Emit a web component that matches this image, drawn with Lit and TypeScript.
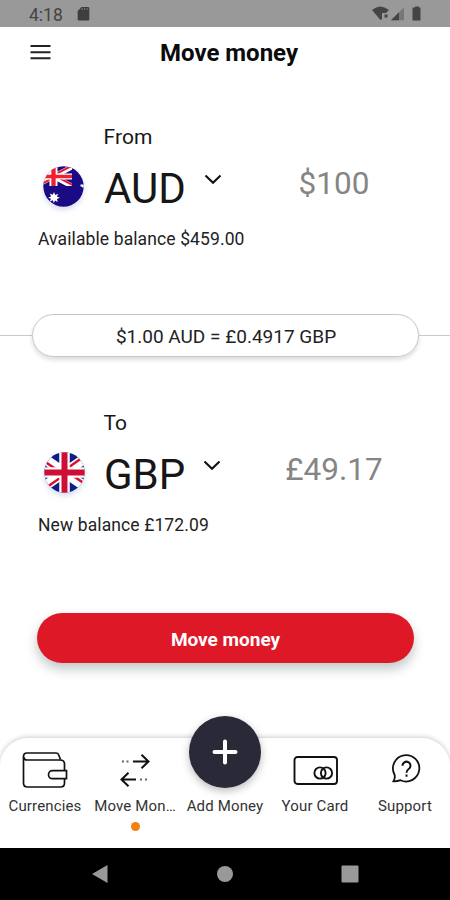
import { LitElement, html, css, svg } from "lit";
import { customElement, property } from "lit/decorators.js";

const diagonals = svg`
  <path d="M0 0L60 40M60 0L0 40" stroke="#fff" stroke-width="10"/>
  <path d="M0 0L30 20" stroke="#e8152c" stroke-width="4" transform="translate(-1 2)"/>
  <path d="M60 0L30 20" stroke="#e8152c" stroke-width="4" transform="translate(-1 -2)"/>
  <path d="M60 40L30 20" stroke="#e8152c" stroke-width="4" transform="translate(1 -2)"/>
  <path d="M0 40L30 20" stroke="#e8152c" stroke-width="4" transform="translate(1 2)"/>`;

const australia = html`<svg width="41" height="41" viewBox="0 0 41 41">
  <clipPath id="round"><circle cx="20.5" cy="20.5" r="20.2"/></clipPath>
  <g clip-path="url(#round)">
    <rect width="41" height="41" fill="#1a0a84"/>
    <svg x="-8" y="1" width="37" height="19" viewBox="0 0 60 40" preserveAspectRatio="none">
      ${diagonals}
      <path d="M30 0V40M0 20H60" stroke="#fff" stroke-width="13"/>
      <path d="M30 0V40M0 20H60" stroke="#f0202c" stroke-width="7"/>
    </svg>
    <path fill="#fff" d="M11 26l1.2 3 3-1.3-1.3 2.8 3 1.3-3 1.2.9 3-2.8-1.5-1.1 2.6-1.2-2.8-3 1.3 1.3-2.8-2.9-1.1 3-1.3-1.2-2.9 2.9 1.3z"/>
    <path fill="#fff" d="M37.500 18.500h4v3h-2l-1-1h-1z"/>
  </g>
</svg>`;

const britain = html`<svg width="41" height="41" viewBox="0 0 41 41">
  <clipPath id="disc"><circle cx="20.5" cy="20.5" r="20.2"/></clipPath>
  <g clip-path="url(#disc)">
    <rect width="41" height="41" fill="#101c87"/>
    <svg x="-5" y="3" width="51" height="35" viewBox="0 0 60 40" preserveAspectRatio="none" overflow="visible">
      <path d="M-6 -4L66 44M66 -4L-6 44" stroke="#fff" stroke-width="11.500"/>
      <path d="M-3 1L21 17M63 39L39 23M57 -1L35 14M3 41L25 26" stroke="#d8112f" stroke-width="2.8"/>
    </svg>
    <path d="M20.5 0V41M0 20.5H41" stroke="#fff" stroke-width="10.5"/>
    <path d="M20.5 0V41M0 20.5H41" stroke="#ce0f35" stroke-width="6"/>
  </g>
</svg>`;

@customElement("currency-panel")
class CurrencyPanel extends LitElement {
  @property() label = "";
  @property() code = "";
  @property() amount = "";
  @property() balance = "";

  static styles = css`
    :host { display: block; height: 136px; color: #161616; }
    .label { height: 30px; line-height: 31px; padding-left: 103.5px; font-size: 21px; letter-spacing: 0.1px; }
    .row { display: grid; grid-template-columns: 104px 99px 46px 170px; height: 70px; }
    .flag { height: 41px; width: 41px; margin: 14px 0 0 43px; border-radius: 50%; box-shadow: 0 3px 5px #9db4d866; }
    :host([code="GBP"]) .flag { margin-left: 44px; }
    .code { font-size: 42px; line-height: 74px; }
    .chev { padding: 22px 0 0 1px; }
    :host([code="GBP"]) .chev { padding-left: 0; }
    .amount { font-size: 31.5px; line-height: 64px; color: #858585; text-align: center; }
    .balance { height: 34px; line-height: 34px; padding-left: 38px; font-size: 17.5px; letter-spacing: 0.11px; color: #222; }
    svg { display: block; }
  `;

  render() {
    return html`
      <div class="label">${this.label}</div>
      <div class="row">
        <div class="flag">${this.code === "AUD" ? australia : britain}</div>
        <div class="code">${this.code}</div>
        <div class="chev"><svg width="18" height="11" viewBox="0 0 18 11"><path d="M1.5 1.5L9 8.7l7.5-7.2" fill="none" stroke="#111" stroke-width="2.1"/></svg></div>
        <div class="amount">${this.amount}</div>
      </div>
      <div class="balance">${this.balance}</div>`;
  }
}

@customElement("app-root")
class AppRoot extends LitElement {
  static styles = css`
    :host { display: flex; flex-direction: column; width: 450px; height: 900px; background: #fff; font-family: Roboto, sans-serif; overflow: hidden; white-space: nowrap; }
    svg { display: block; }
    .status { display: flex; justify-content: space-between; height: 26.5px; background: #999; color: #444; padding: 0 26px 0 29px; }
    .clock { display: flex; gap: 14px; font-size: 17.5px; line-height: 30px; }
    .clock svg { margin-top: 6px; }
    .signals { padding-top: 6px; }
    .header { display: grid; grid-template-columns: 70px 1fr 70px; height: 53px; }
    .menu { padding: 17px 0 0 30px; }
    .title { margin: 0; font-size: 24px; line-height: 53px; font-weight: 700; color: #0b0b0b; text-align: center; padding-left: 8px; }
    .from { margin-top: 42.5px; }
    .rate { display: flex; align-items: center; margin-top: 56px; height: 43px; }
    .rule { height: 1px; background: #c9c9c9; }
    .left { width: 32px; }
    .right { flex: 1; }
    .pill { box-sizing: border-box; width: 387px; height: 43px; border: 1px solid #c6c6c6; border-radius: 22px; text-align: center; font-size: 19px; line-height: 44px; color: #222; box-shadow: 0 3px 4px #0002; padding-left: 1px; }
    .to { margin-top: 50.5px; }
    .cta { margin: 69.5px 36px 0 37px; height: 50px; border: 0; border-radius: 25px; background: #df1827; color: #fff; font: 700 19px/52px Roboto, sans-serif; text-align: center; padding: 1px 0 0; box-shadow: 0 6px 12px #00201c40; }
    .tabs { position: relative; margin-top: auto; display: grid; grid-template-columns: repeat(5, 90px); height: 110.5px; border-radius: 28px 28px 0 0; background: #fff; box-shadow: 0 -1px 5px #0003; }
    .tab { display: flex; flex-direction: column; align-items: center; font-size: 15px; color: #333; letter-spacing: 0.15px; }
    .icon { height: 58px; display: flex; align-items: flex-end; }
    .shift { padding-left: 2px; }
    .name { line-height: 20px; }
    .dot { width: 9px; height: 9px; border-radius: 50%; background: #f0820d; margin-top: 6px; }
    .add { display: grid; place-items: center; width: 72px; height: 72px; border-radius: 50%; background: #2a2938; margin-top: -22px; margin-bottom: 8px; box-shadow: 0 3px 9px #0004; }
    .system { height: 52px; background: #000; box-sizing: border-box; padding-top: 16px; }
  `;

  render() {
    return html`
      <div class="status">
        <div class="clock">4:18
          <svg width="13" height="15" viewBox="0 0 13 15"><path d="M4.5 1H11q1.3 0 1.3 1.3v10.9q0 1.3-1.3 1.3H2q-1.3 0-1.3-1.3V5z" fill="#3e3e3e"/><path d="M5 2v2M7.5 2v2M10 2v2" stroke="#777"/></svg>
        </div>
        <div class="signals"><svg width="52" height="16" viewBox="0 0 52 16" fill="#444">
          <path d="M0 4Q8.300-3 17 4L14 7H10v6L8.500 14z"/><path d="M12.500 8.500h3v3h-3z"/>
          <path d="M19 14.300L32 1.500v12.800z" fill="#777"/><path d="M19 14.300l8-8v8z"/>
          <path d="M43 1.500V.5h4v1h1.500v13h-8v-13z"/>
        </svg></div>
      </div>
      <div class="header">
        <div class="menu"><svg width="21" height="16" viewBox="0 0 21 16"><path d="M.5 2h20M.5 8.200h20M.5 14.200h20" stroke="#222" stroke-width="1.900"/></svg></div>
        <h1 class="title">Move money</h1>
      </div>
      <currency-panel class="from" label="From" code="AUD" amount="$100" balance="Available balance $459.00"></currency-panel>
      <div class="rate">
        <div class="rule left"></div>
        <div class="pill">$1.00 AUD = £0.4917 GBP</div>
        <div class="rule right"></div>
      </div>
      <currency-panel class="to" label="To" code="GBP" amount="£49.17" balance="New balance £172.09"></currency-panel>
      <button class="cta">Move money</button>
      <div class="tabs">
        <div class="tab">
          <div class="icon"><svg width="46" height="44" viewBox="0 0 46 44" fill="none" stroke="#111" stroke-width="1.700">
            <path d="M38.500 7.500L36.500 2.500Q36 1 34 1H5Q1.500 1 1.500 4.500V31Q1.500 35 5.500 35H38.500Q42.500 35 42.500 31V27"/>
            <path d="M1.500 5Q2 8 5 8H38Q42.500 8 42.500 12V18.500"/>
            <path d="M44.500 18.700H30.500a4 4 0 0 0 0 8H44.500z"/>
          </svg></div>
          <div class="name">Currencies</div>
        </div>
        <div class="tab">
          <div class="icon"><svg width="30" height="42" viewBox="0 0 30 42" fill="none" stroke="#111" stroke-width="2">
            <path d="M13 7.500H28M21.500.800L28.500 7.500l-7 6.700M16 25.500H2M8.500 18.800L1.500 25.500l7 6.700"/>
            <path d="M2 7.500h2M6.500 7.500h2M20 25.500h2M25 25.500h2" stroke="#666"/>
          </svg></div>
          <div class="name">Move Mon…</div>
          <div class="dot"></div>
        </div>
        <div class="tab">
          <div class="add"><svg width="26" height="26" viewBox="0 0 26 26"><path d="M13 2.500v21M2.500 13h21" stroke="#fff" stroke-width="4" stroke-linecap="round"/></svg></div>
          <div class="name">Add Money</div>
        </div>
        <div class="tab">
          <div class="icon shift"><svg width="46" height="40" viewBox="0 0 46 40" fill="none" stroke="#111" stroke-width="1.900">
            <rect x="1.500" y="1" width="42.500" height="27" rx="3"/><circle cx="27" cy="17" r="5.600"/><circle cx="33.500" cy="17" r="5.600"/>
          </svg></div>
          <div class="name">Your Card</div>
        </div>
        <div class="tab">
          <div class="icon shift"><svg width="30" height="42" viewBox="0 0 30 42" fill="none" stroke="#111" stroke-width="1.800">
            <path d="M3.500 20.500A13.200 13.200 0 1 1 9.500 26.200Q6 27.500 2.500 27.300Q4.500 24 3.500 20.500z"/>
            <path d="M11.500 11.800a4 4 0 1 1 6.200 3.200q-2.200 1.500-2.200 3.800M15.500 20.500v2.200" stroke-width="2"/>
          </svg></div>
          <div class="name">Support</div>
        </div>
      </div>
      <div class="system"><svg width="450" height="20" viewBox="0 0 450 20" fill="#999">
        <path d="M92 10l15.500-9v18z"/><circle cx="225" cy="10" r="8"/><rect x="341.500" y="1.500" width="17" height="17" rx="1"/>
      </svg></div>`;
  }
}
